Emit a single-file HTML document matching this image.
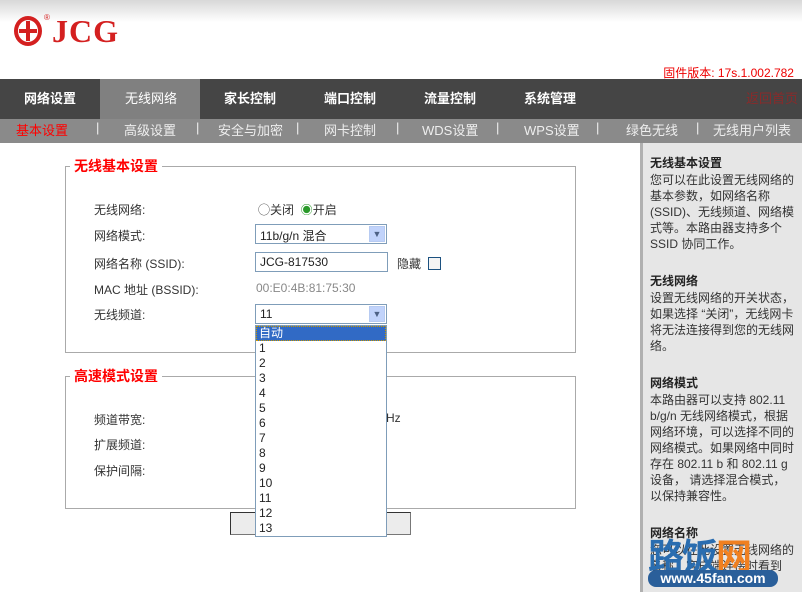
<!DOCTYPE html>
<html><head><meta charset="utf-8"><style>
*{margin:0;padding:0;box-sizing:border-box}
body{width:802px;height:592px;overflow:hidden;background:#fff;font-family:"Liberation Sans","Noto Sans CJK SC",sans-serif;font-size:12px;color:#222;position:relative}
.a{position:absolute}
.hdr{left:0;top:0;width:802px;height:22px;background:linear-gradient(#d8d8d8,#fff)}
.nav{left:0;top:79px;width:802px;height:40px;background:#454545}
.nav span{position:absolute;top:9px;font-size:13px;font-weight:bold;color:#fff}
.sub{left:0;top:119px;width:802px;height:24px;background:#8a8a8a}
.sub span{position:absolute;top:1px;font-size:13px;color:#eee}
.side{left:640px;top:143px;width:162px;height:449px;background:#e6e6e6;border-left:3px solid #b0b0b0}
.side h4{font-size:12px;font-weight:bold;margin:0 0 1px}
.side p{font-size:12px;line-height:16px;color:#333}
fieldset{position:absolute;border:1px solid #aaa;border-radius:0}
legend{color:#f00;font-weight:bold;font-size:14px;padding:0 4px;margin-left:4px}
.l{position:absolute;font-size:12px;color:#333}
.sel{position:absolute;border:1px solid #7f9db9;background:#fff;height:20px;font-size:12px;padding:2px 4px}
.sel i{position:absolute;right:1px;top:1px;width:16px;height:16px;background:#c1d3fb;border:1px solid #b7cbf2;color:#4d6185;font-style:normal;font-size:9px;text-align:center;line-height:15px}
.dd{left:255px;top:325px;width:132px;height:212px;border:1px solid #7f9db9;background:#fff}
.dd div{height:15px;line-height:15px;padding-left:3px;font-size:12px;color:#222}
</style></head><body>
<div class="a hdr"></div>
<div class="a" style="left:14px;top:16px;width:28px;height:30px;border-radius:50%;border:4px solid #d42020"></div>
<div class="a" style="left:26px;top:21px;width:4px;height:20px;background:#d42020"></div>
<div class="a" style="left:19px;top:29px;width:18px;height:4px;background:#d42020"></div>
<div class="a" style="left:52px;top:13px;font-family:'Liberation Serif',serif;font-size:32px;font-weight:bold;color:#d42020;letter-spacing:1px">JCG</div>
<div class="a" style="left:44px;top:13px;font-size:8px;color:#d42020">®</div>
<div class="a" style="right:8px;top:64px;font-size:12px;color:#e00">固件版本: 17s.1.002.782</div>
<div class="a nav">
<div class="a" style="left:100px;top:0;width:100px;height:40px;background:#808080"></div>
<span style="left:24px">网络设置</span><span style="left:125px;font-weight:normal">无线网络</span><span style="left:224px">家长控制</span><span style="left:324px">端口控制</span><span style="left:424px">流量控制</span><span style="left:524px">系统管理</span><span style="left:746px;font-weight:normal;color:#8a2a2a">返回首页</span>
</div>
<div class="a sub">
<span style="left:16px;color:#f00">基本设置</span><span style="left:96px">|</span><span style="left:124px">高级设置</span><span style="left:196px">|</span><span style="left:218px">安全与加密</span><span style="left:296px">|</span><span style="left:324px">网卡控制</span><span style="left:396px">|</span><span style="left:422px">WDS设置</span><span style="left:496px">|</span><span style="left:524px">WPS设置</span><span style="left:596px">|</span><span style="left:626px">绿色无线</span><span style="left:696px">|</span><span style="left:713px">无线用户列表</span>
</div>
<div class="a side"><div style="padding:11px 0 0 7px;width:152px">
<h4>无线基本设置</h4><p>您可以在此设置无线网络的基本参数，如网络名称(SSID)、无线频道、网络模式等。本路由器支持多个SSID 协同工作。</p>
<h4 style="margin-top:20px">无线网络</h4><p>设置无线网络的开关状态，如果选择 “关闭”，无线网卡将无法连接得到您的无线网络。</p>
<h4 style="margin-top:20px">网络模式</h4><p>本路由器可以支持 802.11 b/g/n 无线网络模式，根据网络环境，可以选择不同的网络模式。如果网络中同时存在 802.11 b 和 802.11 g 设备， 请选择混合模式，以保持兼容性。</p>
<h4 style="margin-top:20px">网络名称</h4><p>您可以在此设置无线网络的名称，客户端连接时看到</p>
</div></div>
<div class="a" style="left:648px;top:528px;font-size:36px;font-weight:bold;color:#2a6db0;letter-spacing:-2px">路饭<span style="color:#f08020">网</span></div>
<div class="a" style="left:648px;top:570px;width:130px;height:17px;border-radius:8px;background:#2a5f9a;color:#fff;font-size:14px;font-weight:bold;line-height:17px;text-align:center">www.45fan.com</div>

<fieldset style="left:65px;top:156px;width:511px;height:197px"><legend>无线基本设置</legend></fieldset>
<div class="l" style="left:94px;top:201px">无线网络:</div>
<div class="l" style="left:258px;top:201px">◯关闭 &nbsp;<span style="color:#2a9a2a">◉</span>开启</div>
<div class="l" style="left:94px;top:227px">网络模式:</div>
<div class="sel" style="left:255px;top:224px;width:132px">11b/g/n 混合<i>▼</i></div>
<div class="l" style="left:94px;top:255px">网络名称 (SSID):</div>
<div class="sel" style="left:255px;top:252px;width:133px;border-color:#7f9db9;font-size:12px">JCG-817530</div>
<div class="l" style="left:397px;top:255px">隐藏</div>
<div class="a" style="left:428px;top:257px;width:13px;height:13px;border:1px solid #1c5180;background:#f4f4f4"></div>
<div class="l" style="left:94px;top:281px">MAC 地址 (BSSID):</div>
<div class="l" style="left:256px;top:281px;color:#888">00:E0:4B:81:75:30</div>
<div class="l" style="left:94px;top:306px">无线频道:</div>
<div class="sel" style="left:255px;top:304px;width:132px">11<i>▼</i></div>

<fieldset style="left:65px;top:366px;width:511px;height:143px"><legend>高速模式设置</legend></fieldset>
<div class="l" style="left:94px;top:411px">频道带宽:</div>
<div class="l" style="left:386px;top:411px">Hz</div>
<div class="l" style="left:94px;top:436px">扩展频道:</div>
<div class="l" style="left:94px;top:462px">保护间隔:</div>
<div class="a" style="left:230px;top:512px;width:181px;height:23px;background:#ececec;border:1px solid #333;border-right-color:#777;border-bottom-color:#777"></div>

<div class="a dd">
<div style="background:#316ac5;color:#fff;outline:1px dotted #c90;outline-offset:-1px">自动</div>
<div>1</div><div>2</div><div>3</div><div>4</div><div>5</div><div>6</div><div>7</div><div>8</div><div>9</div><div>10</div><div>11</div><div>12</div><div>13</div>
</div>
</body></html>
